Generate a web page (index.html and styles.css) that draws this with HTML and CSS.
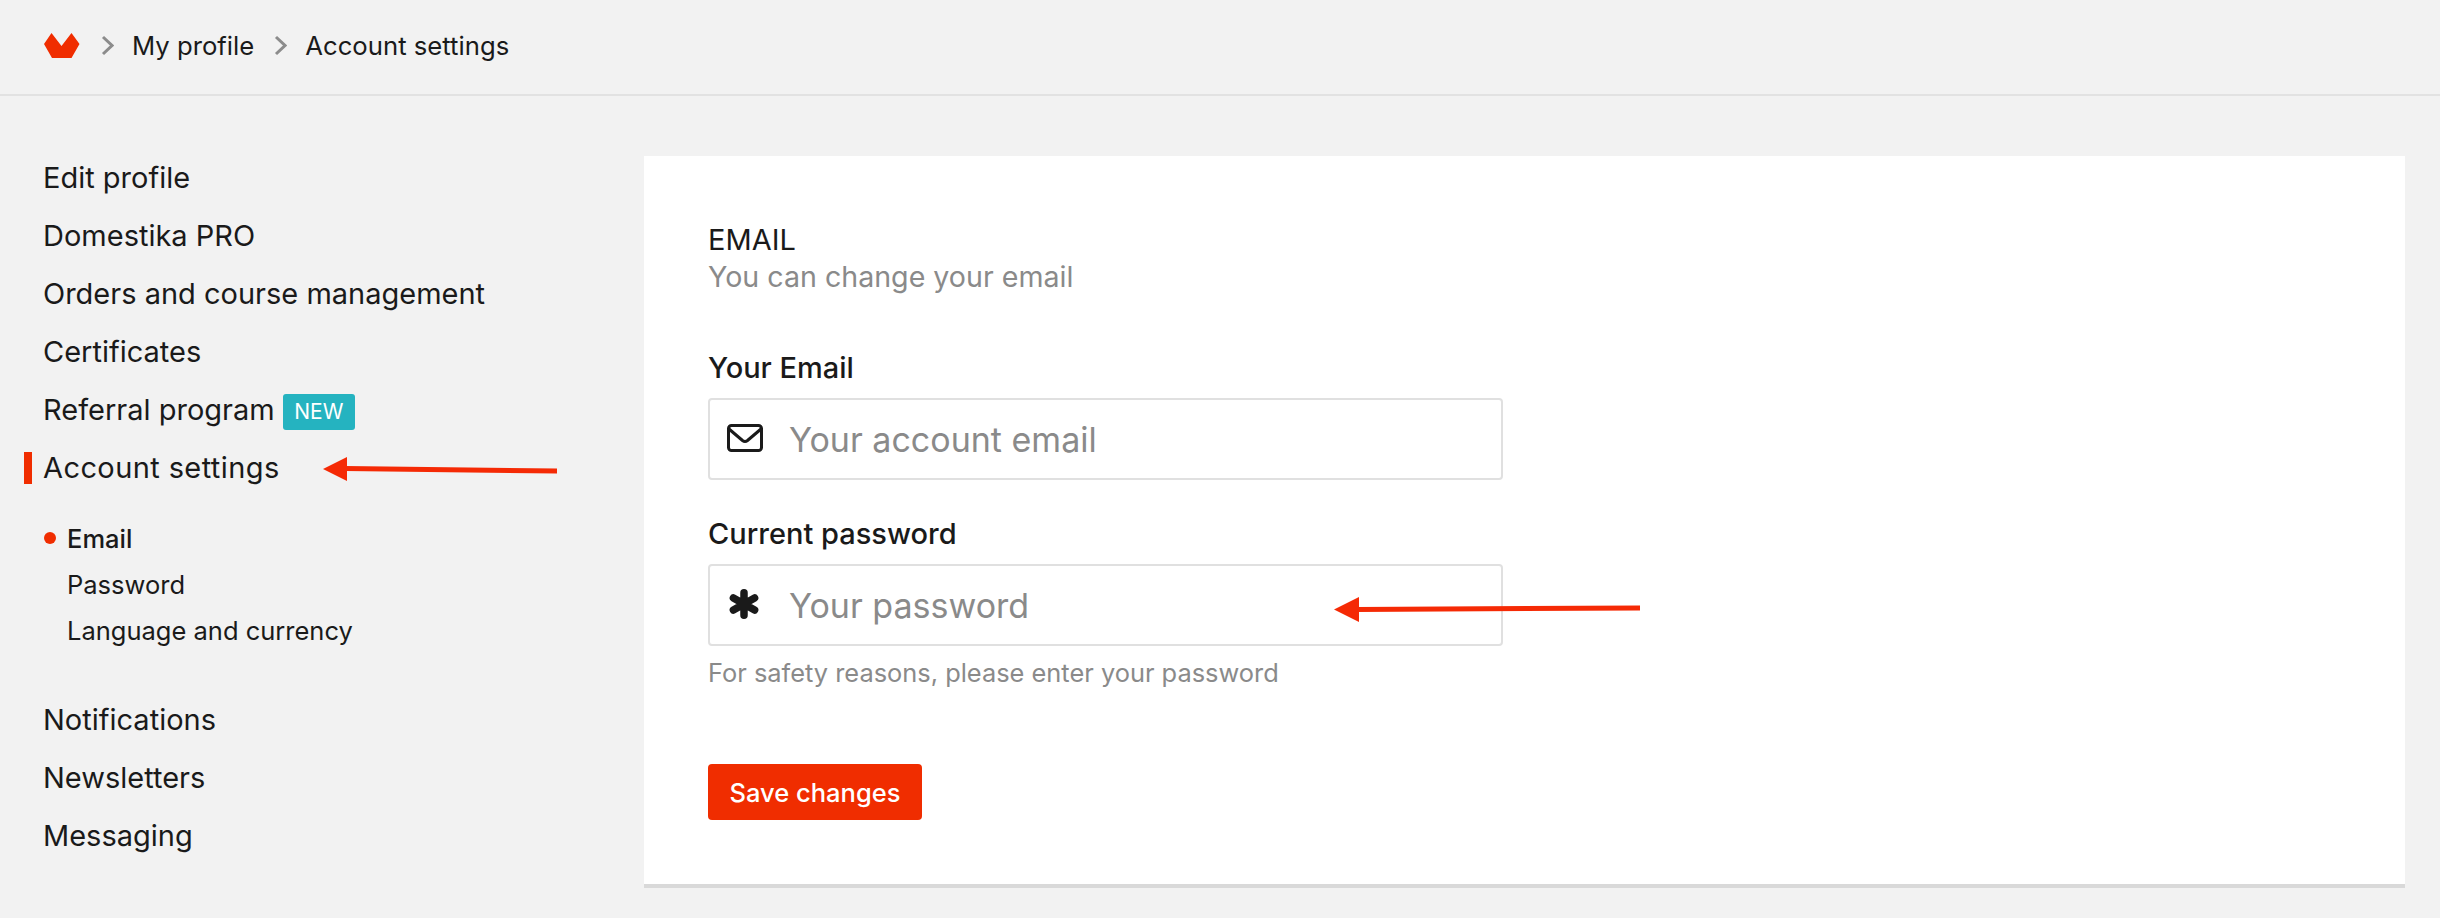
FILE: index.html
```html
<!DOCTYPE html>
<html lang="en">
<head>
<meta charset="utf-8">
<title>Account settings</title>
<link rel="stylesheet" href="styles.css">
</head>
<body>
<header class="topbar">
  <svg class="logo" viewBox="0 0 36 26" width="36" height="26"><polygon points="0,11 7.5,0 17.5,13 27.5,0 35.5,11 27.5,25 8,25" fill="#f02d00"/></svg>
  <svg class="chev" viewBox="0 0 13 21" width="13" height="21"><path d="M2 2l9 8.500-9 8.500" fill="none" stroke="#8c8c8c" stroke-width="3"/></svg>
  <a class="crumb">My profile</a>
  <svg class="chev" viewBox="0 0 13 21" width="13" height="21"><path d="M2 2l9 8.500-9 8.500" fill="none" stroke="#8c8c8c" stroke-width="3"/></svg>
  <a class="crumb">Account settings</a>
</header>
<main class="layout">
  <nav class="sidebar">
    <a class="nav-item">Edit profile</a>
    <a class="nav-item">Domestika PRO</a>
    <a class="nav-item">Orders and course management</a>
    <a class="nav-item">Certificates</a>
    <a class="nav-item">Referral program <span class="badge">NEW</span></a>
    <a class="nav-item active">Account settings</a>
    <div class="subnav">
      <a class="sub-item current">Email</a>
      <a class="sub-item">Password</a>
      <a class="sub-item">Language and currency</a>
    </div>
    <a class="nav-item">Notifications</a>
    <a class="nav-item">Newsletters</a>
    <a class="nav-item">Messaging</a>
  </nav>
  <section class="panel">
    <h2 class="title">EMAIL</h2>
    <p class="subtitle">You can change your email</p>
    <div class="field first">
      <label class="label">Your Email</label>
      <div class="input">
        <svg class="icon mail" viewBox="0 0 36 28" width="36" height="28"><rect x="1.500" y="1.500" width="33" height="25" rx="3" fill="none" stroke="#1a1a1a" stroke-width="3"/><path d="M2 5l13.500 11.500q2.500 2 5 0L34 5" fill="none" stroke="#1a1a1a" stroke-width="3"/></svg>
        <span class="placeholder">Your account email</span>
      </div>
    </div>
    <div class="field">
      <label class="label">Current password</label>
      <div class="input">
        <svg class="icon star" viewBox="0 0 30 30" width="30" height="30"><g stroke="#1a1a1a" stroke-width="7.500" stroke-linecap="round"><path d="M15 3.750v22.500M4.400 8.900l21.200 12.200M4.400 21.100l21.200-12.200"/></g></svg>
        <span class="placeholder">Your password</span>
      </div>
      <p class="help">For safety reasons, please enter your password</p>
    </div>
    <button class="save">Save changes</button>
  </section>
</main>
<svg class="annotations" width="2440" height="918" viewBox="0 0 2440 918">
  <path d="M345 468.500L557 471" stroke="#f52a05" stroke-width="5" fill="none"/>
  <polygon points="323,469 347,457 347,481" fill="#f52a05"/>
  <path d="M1357 609.500L1640 608" stroke="#f52a05" stroke-width="5" fill="none"/>
  <polygon points="1334,609.500 1359,597 1359,622" fill="#f52a05"/>
</svg>
</body>
</html>
```
FILE: styles.css
```css
* { box-sizing: border-box; }
html, body { margin: 0; height: 918px; overflow: hidden; }
body {
  position: relative;
  background: #f2f2f2;
  color: #1a1a1a;
  font-family: Inter, "Liberation Sans", sans-serif;
}
.topbar {
  height: 96px;
  border-bottom: 2px solid #e2e2e2;
  display: flex;
  align-items: center;
  padding: 0 0 3px 44px;
  font-size: 25.700px;
}
.logo { margin-right: 21px; }
.chev { margin-right: 18px; }
.crumb { margin-right: 20px; }
.layout { display: flex; align-items: flex-start; }
.sidebar {
  width: 644px;
  padding: 53px 0 0 43px;
  flex: none;
}
.nav-item {
  position: relative;
  display: block;
  height: 58px;
  line-height: 58px;
  font-size: 29px;
}
.nav-item.active { letter-spacing: 0.400px; }
.nav-item.active::before {
  content: "";
  position: absolute;
  left: -19px;
  top: 13px;
  width: 8px;
  height: 32px;
  background: #f02d00;
}
.badge {
  display: inline-block;
  height: 36px;
  width: 72px;
  line-height: 36px;
  text-align: center;
  vertical-align: 1px;
  background: #25b3c0;
  color: #fff;
  font-size: 21px;
  border-radius: 3px;
}
.subnav { margin: 19px 0 37px; }
.sub-item {
  position: relative;
  display: block;
  height: 46px;
  line-height: 46px;
  padding-left: 24px;
  font-size: 25.500px;
}
.sub-item.current { font-weight: 500; }
.sub-item.current::before {
  content: "";
  position: absolute;
  left: 1px;
  top: 16px;
  width: 12px;
  height: 12px;
  border-radius: 50%;
  background: #f02d00;
}
.panel {
  width: 1761px;
  margin-top: 60px;
  padding: 65px 64px 64px;
  background: #fff;
  border-bottom: 4px solid #d9d9d9;
}
.title { margin: 0; font-size: 29px; font-weight: 400; line-height: 38px; }
.subtitle { margin: 0; font-size: 28.600px; line-height: 36px; color: #8a8a8a; }
.field { margin-top: 36px; width: 795px; }
.field.first { margin-top: 55px; }
.label { display: block; font-size: 29px; font-weight: 500; line-height: 36px; margin-bottom: 12px; }
.input {
  height: 82px;
  border: 2px solid #e0e0e0;
  border-radius: 4px;
  display: flex;
  align-items: center;
  padding-left: 17px;
}
.icon { flex: none; margin-right: 26px; }
.mail { margin-top: -2px; }
.star { margin: -2px 30px 0 2px; }
.placeholder { font-size: 34px; color: #8a8a8a; }
.help { margin: 12px 0 0; font-size: 25.400px; line-height: 30px; color: #8a8a8a; }
.save {
  display: block;
  width: 214px;
  height: 56px;
  margin-top: 76px;
  border: 0;
  border-radius: 4px;
  background: #f02d00;
  color: #fff;
  font-family: inherit;
  font-size: 25.500px;
  font-weight: 500;
}
.annotations { position: absolute; left: 0; top: 0; pointer-events: none; }
```
